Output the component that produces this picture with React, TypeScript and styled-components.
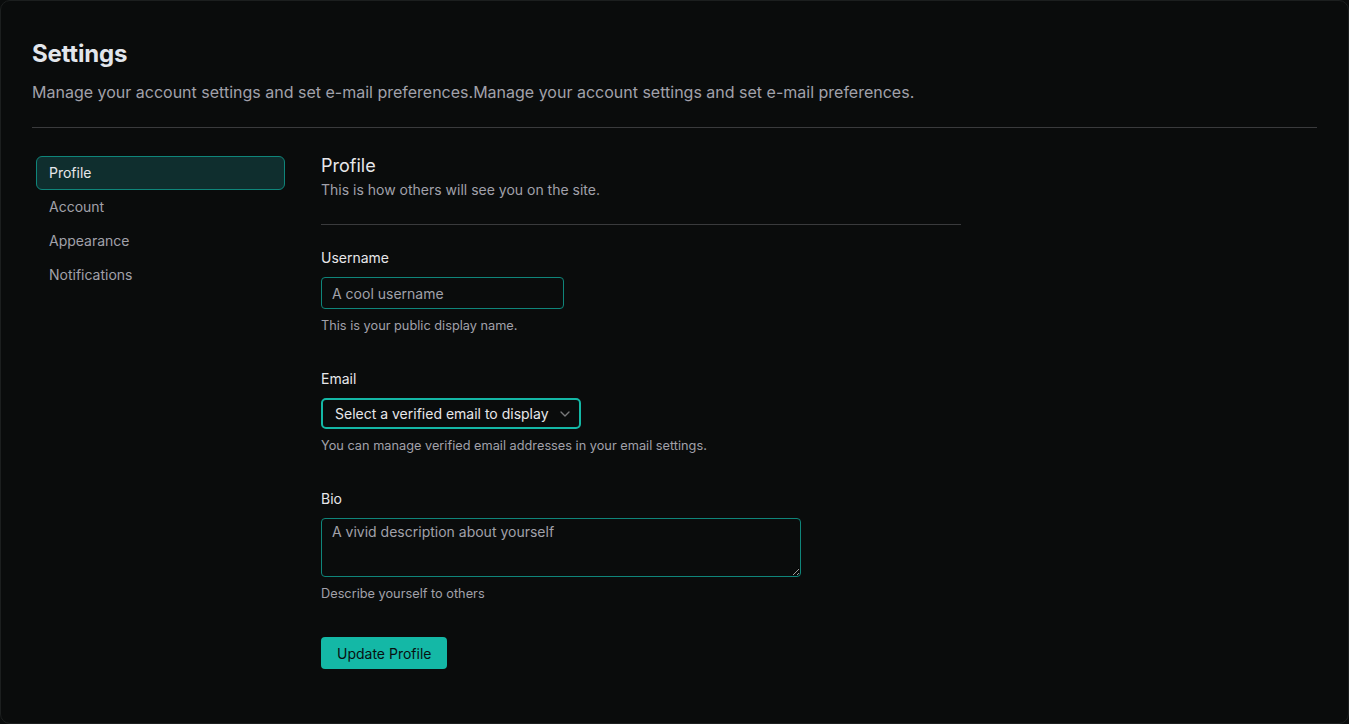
import { useState } from 'react'
import styled, { createGlobalStyle } from 'styled-components'
import { ChevronDown } from 'lucide-react'

/* Constants */
const COLORS = {
  background: '#0a0c0c',
  border: '#1c1f1f',
  separator: '#3a3b3d',
  title: '#e2e6ec',
  text: '#e7e7ea',
  muted: '#a1a1aa',
  teal: '#14b8a6',
  tealBorder: '#0f857a',
  tealActiveBg: '#0f2e2e'
}

const GlobalStyle = createGlobalStyle`
  * { box-sizing: border-box; }
  html, body {
    margin: 0;
    background: ${COLORS.background};
    font-family: Inter, 'Noto Sans', sans-serif;
  }
`

/* Styled components */
const Card = styled.main`
  min-height: 100vh;
  border: 1px solid ${COLORS.border};
  border-radius: 10px;
  background: ${COLORS.background};
  padding: 37px 31px 40px 31px;
`

const Header = styled.header`
  & h1 {
    margin: 0;
    font-size: 24px;
    line-height: 32px;
    font-weight: 700;
    color: ${COLORS.title};
    letter-spacing: -0.2px;
  }

  & p {
    margin: 10px 0 0 0;
    font-size: 16px;
    line-height: 24px;
    color: ${COLORS.muted};
  }
`

const Separator = styled.hr<{ $top: number }>`
  border: none;
  height: 1px;
  background: ${COLORS.separator};
  margin: ${p => p.$top}px 0 0 0;
  width: 100%;
`

const Body = styled.div`
  display: grid;
  grid-template-columns: 257px 1fr;
  gap: 32px;
  margin-top: 22px;
`

const Sidebar = styled.nav`
  display: flex;
  flex-direction: column;
  padding: 6px 4px 0 4px;
`

const NavItem = styled.a<{ $active?: boolean }>`
  display: flex;
  align-items: center;
  height: 34px;
  padding: 0 12px 1px 12px;
  border: 1px solid ${p => (p.$active ? COLORS.tealBorder : 'transparent')};
  border-radius: 6px;
  background: ${p => (p.$active ? COLORS.tealActiveBg : 'transparent')};
  color: ${p => (p.$active ? COLORS.text : COLORS.muted)};
  font-size: 14px;
  text-decoration: none;
  cursor: pointer;
`

const Content = styled.section`
  display: flex;
  flex-direction: column;
  max-width: 640px;
  padding-top: 2px;

  & h2 {
    margin: 0;
    font-size: 18px;
    line-height: 28px;
    font-weight: 400;
    color: ${COLORS.text};
  }

  & .subtitle {
    margin: 0;
    font-size: 14px;
    line-height: 20px;
    color: ${COLORS.muted};
  }
`

const Form = styled.form`
  display: flex;
  flex-direction: column;
  gap: 35px;
  margin-top: 23px;
`

const Field = styled.div`
  display: flex;
  flex-direction: column;
  align-items: flex-start;

  & label {
    font-size: 14px;
    line-height: 20px;
    font-weight: 400;
    color: ${COLORS.text};
    margin-bottom: 9px;
  }

  & .help {
    margin-top: 9px;
    font-size: 12.75px;
    line-height: 16px;
    color: ${COLORS.muted};
  }
`

const Input = styled.input`
  width: 243px;
  height: 32px;
  padding: 0 10px;
  border: 1px solid ${COLORS.tealBorder};
  border-radius: 4px;
  background: transparent;
  color: ${COLORS.text};
  font-family: inherit;
  font-size: 14px;
  outline: none;

  &::placeholder { color: ${COLORS.muted}; }
`

const SelectTrigger = styled.button`
  display: flex;
  align-items: center;
  gap: 8px;
  width: 260px;
  height: 31px;
  padding: 0 8px 0 12px;
  border: 2px solid ${COLORS.teal};
  border-radius: 5px;
  background: transparent;
  color: ${COLORS.text};
  font-family: inherit;
  font-size: 14px;
  cursor: pointer;

  & span { flex: 1; text-align: left; white-space: nowrap; }
  & svg { opacity: 0.5; flex-shrink: 0; }
`

const TextArea = styled.textarea`
  display: block;
  width: 480px;
  height: 59px;
  padding: 4px 10px;
  border: 1px solid ${COLORS.tealBorder};
  border-radius: 4px;
  background: transparent;
  color: ${COLORS.text};
  font-family: inherit;
  font-size: 14px;
  line-height: 17px;
  outline: none;
  resize: vertical;

  &::placeholder { color: ${COLORS.muted}; }
`

const SubmitButton = styled.button`
  align-self: flex-start;
  height: 32px;
  padding: 0 16px;
  border: none;
  border-radius: 4px;
  background: ${COLORS.teal};
  color: #081010;
  font-family: inherit;
  font-size: 14px;
  font-weight: 400;
  cursor: pointer;
`

const NAV = ['Profile', 'Account', 'Appearance', 'Notifications']

export default function App() {
  const [active, setActive] = useState('Profile')

  return (
    <>
      <GlobalStyle />
      <Card>
        <Header>
          <h1>Settings</h1>
          <p>Manage your account settings and set e-mail preferences.Manage your account settings and set e-mail preferences.</p>
        </Header>
        <Separator $top={23} />

        <Body>
          <Sidebar>
            {NAV.map(item =>
              <NavItem key={item} $active={item === active} onClick={() => setActive(item)}>{item}</NavItem>
            )}
          </Sidebar>

          <Content>
            <h2>Profile</h2>
            <p className='subtitle'>This is how others will see you on the site.</p>
            <Separator $top={24} />

            <Form onSubmit={e => e.preventDefault()}>
              <Field>
                <label>Username</label>
                <Input type='text' placeholder='A cool username' />
                <span className='help'>This is your public display name.</span>
              </Field>

              <Field>
                <label>Email</label>
                <SelectTrigger type='button'>
                  <span>Select a verified email to display</span>
                  <ChevronDown size={16} />
                </SelectTrigger>
                <span className='help'>You can manage verified email addresses in your email settings.</span>
              </Field>

              <Field>
                <label>Bio</label>
                <TextArea placeholder='A vivid description about yourself' />
                <span className='help'>Describe yourself to others</span>
              </Field>

              <SubmitButton type='submit'>Update Profile</SubmitButton>
            </Form>
          </Content>
        </Body>
      </Card>
    </>
  )
}
